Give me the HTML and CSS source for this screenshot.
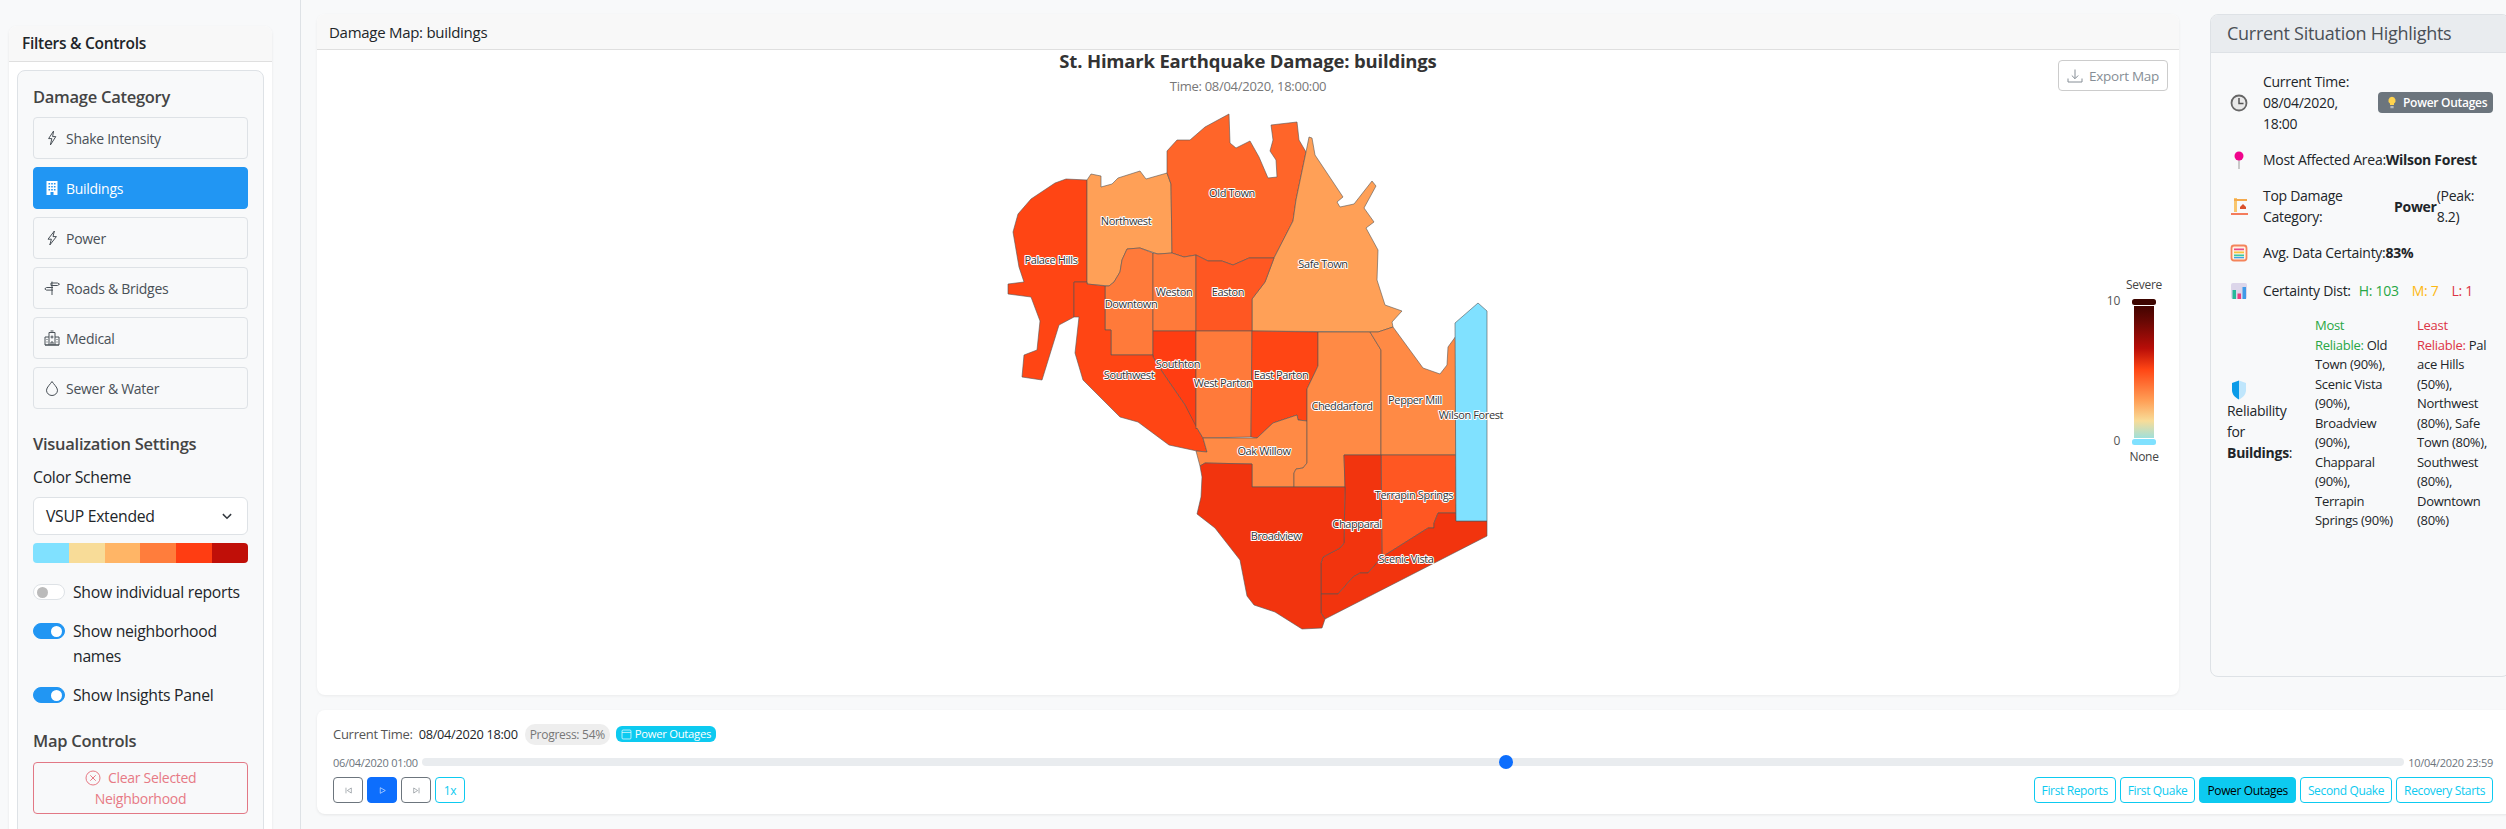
FILE: index.html
```html
<!DOCTYPE html>
<html lang="en">
<head>
  <meta charset="UTF-8">
  <meta name="viewport" content="width=device-width, initial-scale=1.0">
  <title>St. Himark Earthquake Damage</title>
  <link rel="stylesheet" href="styles.css">
</head>
<body>
  <!-- Coluna de filtros -->
  <aside class="sidebar">
    <div class="filters">
      <h2 class="filters-title">Filters &amp; Controls</h2>
      <div class="filters-body">
        <div class="filters-box">
          <h3 class="group-title">Damage Category</h3>
          <div class="category-list">
            <button class="category">
              <svg class="icon" viewBox="0 0 16 16"><path d="M9.6 1 4.6 8.6h3.2L6.4 15 11.8 6.6H8.6l1-5.6z"/></svg>
              Shake Intensity
            </button>
            <button class="category category-active">
              <svg class="icon" viewBox="0 0 16 16"><path class="solid" d="M2.5 1h11v14h-4v-3h-3v3h-4z"/><path class="holes" d="M4.5 3h1.6v1.6H4.5zM7.2 3h1.6v1.6H7.2zM9.9 3h1.6v1.6H9.9zM4.5 6h1.6v1.6H4.5zM7.2 6h1.6v1.6H7.2zM9.9 6h1.6v1.6H9.9zM4.5 9h1.6v1.6H4.5zM7.2 9h1.6v1.6H7.2zM9.9 9h1.6v1.6H9.9z"/></svg>
              Buildings
            </button>
            <button class="category">
              <svg class="icon" viewBox="0 0 16 16"><path d="M10.4 1 4 9.2h3.4L5.8 15l6.6-8.4H9z"/></svg>
              Power
            </button>
            <button class="category">
              <svg class="icon" viewBox="0 0 16 16"><path d="M8 15V1.5M7 3h6.5L15.5 4.2 13.5 5.5H7zM9 7.5H2.5L.8 8.8l1.7 1.3H9"/></svg>
              Roads &amp; Bridges
            </button>
            <button class="category">
              <svg class="icon" viewBox="0 0 16 16"><path d="M5 15V2.5h6V15M5 7H1v8h14V7h-4M1 15h14M6.5 1h3M8 5.5v3M6.500 7h3M7 15v-3h2v3M2.5 9.5h1M2.5 12h1M12.5 9.5h1M12.5 12h1"/></svg>
              Medical
            </button>
            <button class="category">
              <svg class="icon" viewBox="0 0 16 16"><path d="M8 1.500C6.500 4 2.500 7.400 2.500 10.200a5.500 5.300 0 0 0 11 0C13.500 7.400 9.500 4 8 1.500z"/></svg>
              Sewer &amp; Water
            </button>
          </div>

          <h3 class="group-title settings-title">Visualization Settings</h3>
          <div class="field-label">Color Scheme</div>
          <div class="select-box">
            VSUP Extended
            <svg class="chevron" viewBox="0 0 16 16"><path d="M2.500 5.500 8 11l5.500-5.500"/></svg>
          </div>
          <div class="scheme">
            <span class="swatch swatch-1"></span>
            <span class="swatch swatch-2"></span>
            <span class="swatch swatch-3"></span>
            <span class="swatch swatch-4"></span>
            <span class="swatch swatch-5"></span>
            <span class="swatch swatch-6"></span>
          </div>

          <div class="switch-row">
            <span class="switch"><span class="knob"></span></span>
            <span>Show individual reports</span>
          </div>
          <div class="switch-row">
            <span class="switch switch-on"><span class="knob"></span></span>
            <span>Show neighborhood names</span>
          </div>
          <div class="switch-row">
            <span class="switch switch-on"><span class="knob"></span></span>
            <span>Show Insights Panel</span>
          </div>

          <h3 class="group-title controls-title">Map Controls</h3>
          <button class="clear-btn">
            <svg class="icon" viewBox="0 0 16 16"><circle cx="8" cy="8" r="7"/><path d="M5.300 5.300l5.400 5.400M10.700 5.300l-5.400 5.400"/></svg>
            Clear Selected Neighborhood
          </button>
        </div>
      </div>
    </div>
  </aside>

  <main class="content">
    <div class="top-row">
      <section class="map-card">
        <h2 class="map-title">Damage Map: buildings</h2>
        <div class="map-body">
          <button class="export-btn">
            <svg class="icon" viewBox="0 0 16 16"><path d="M8 1.500v9M4.800 7.500 8 10.700l3.200-3.200M1 10.500v3.500h14v-3.500"/></svg>
            Export Map
          </button>
          <div class="chart-head">
            <div class="chart-title">St. Himark Earthquake Damage: buildings</div>
            <div class="chart-time">Time: 08/04/2020, 18:00:00</div>
          </div>
          <svg class="map" viewBox="317 96 1862 599">
            <defs>
              <linearGradient id="legendRamp" x1="0" y1="0" x2="0" y2="1">
                <stop offset="0" stop-color="#420400"/>
                <stop offset="0.12" stop-color="#6a0804"/>
                <stop offset="0.32" stop-color="#b80d08"/>
                <stop offset="0.48" stop-color="#ff4514"/>
                <stop offset="0.72" stop-color="#ffa057"/>
                <stop offset="0.87" stop-color="#f8dc98"/>
                <stop offset="1" stop-color="#a0e0da"/>
              </linearGradient>
            </defs>

            <g class="areas">
              <polygon fill="#ff4514" points="1087,180 1066,179 1055,183 1031,199 1018,214 1013,232 1019,267 1024,282 1008,284 1008,294 1031,297 1040,321 1037,350 1024,355 1022,377 1042,380 1059,325 1074,317 1074,282 1087,282"/>
              <polygon fill="#ffa057" points="1087,180 1091,174 1101,176 1101,187 1112,184 1118,178 1140,171 1146,179 1167,173 1171,184 1172,253 1158,254 1140,248 1127,249 1122,260 1120,272 1114,282 1109,286 1087,284"/>
              <polygon fill="#ff6529" points="1167,173 1167,151 1177,140 1190,140 1205,127 1229,114 1230,143 1236,148 1250,141 1259,157 1268,178 1277,177 1276,160 1270,151 1273,140 1271,125 1297,122 1299,140 1306,152 1296,200 1293,221 1274,258 1249,258 1233,265 1222,261 1208,261 1196,255 1184,257 1172,253 1171,184"/>
              <polygon fill="#ffa057" points="1306,152 1309,137 1312,138 1315,155 1343,197 1337,202 1340,207 1354,204 1372,181 1376,186 1364,208 1374,222 1366,228 1378,250 1377,280 1385,305 1402,311 1392,322 1393,327 1378,332 1252,331 1252,299 1265,282 1274,258 1293,221 1296,200"/>
              <polygon fill="#ff7a3a" points="1127,249 1140,248 1153,253 1153,355 1111,355 1111,330 1105,330 1105,286 1109,286 1114,282 1120,272 1122,260"/>
              <polygon fill="#ff7a3a" points="1153,253 1158,254 1172,253 1184,257 1196,255 1196,331 1153,331"/>
              <polygon fill="#ff5722" points="1196,255 1208,261 1222,261 1233,265 1249,258 1274,258 1265,282 1252,299 1252,331 1196,331"/>
              <polygon fill="#ff3d12" points="1153,331 1196,331 1196,429 1185,405 1163,373 1153,357"/>
              <polygon fill="#ff4514" points="1074,282 1087,282 1087,284 1105,286 1105,330 1111,330 1111,355 1153,355 1153,357 1163,373 1185,405 1197,428 1203,438 1207,452 1197,451 1169,445 1138,422 1120,417 1083,380 1075,353 1079,317 1074,317"/>
              <polygon fill="#ff7a3a" points="1196,331 1252,331 1251,437 1203,438 1197,428 1196,429"/>
              <polygon fill="#ff4514" points="1252,331 1318,332 1318,366 1307,389 1307,421 1298,420 1297,415 1273,423 1257,438 1251,437"/>
              <polygon fill="#ff8a45" points="1203,438 1257,438 1273,423 1297,415 1298,420 1307,421 1307,463 1303,468 1296,469 1294,473 1294,487 1252,487 1252,464 1205,463 1200,466 1196,451 1207,452"/>
              <polygon fill="#ff8a45" points="1318,332 1370,332 1381,350 1381,455 1344,455 1345,487 1294,487 1294,473 1296,469 1303,468 1307,463 1307,389 1318,366"/>
              <polygon fill="#ff8a45" points="1370,332 1378,332 1393,327 1423,368 1440,374 1447,365 1448,347 1456,336 1456,455 1381,455 1381,350"/>
              <polygon fill="#ff5722" points="1381,455 1456,455 1456,513 1438,513 1434,523 1434,528 1428,528 1382,557"/>
              <polygon fill="#f2340e" points="1344,455 1381,455 1382,557 1368,573 1360,573 1353,577 1338,594 1321,594 1321,563 1323,557 1340,548 1344,543 1345,487"/>
              <polygon fill="#f2340e" points="1321,594 1338,594 1353,577 1360,573 1368,573 1382,557 1428,528 1434,528 1434,523 1438,513 1456,513 1456,521 1487,521 1487,536 1325,619 1321,613"/>
              <polygon fill="#f2340e" points="1200,466 1205,463 1252,464 1252,487 1345,487 1344,543 1340,548 1323,557 1321,563 1321,613 1325,619 1322,628 1302,629 1275,612 1254,605 1247,596 1240,560 1215,528 1197,514 1201,497 1202,477"/>
              <polygon fill="#80e1ff" points="1455,323 1478,303 1487,311 1487,521 1456,521"/>
            </g>

            <g class="labels">
              <text x="1051" y="264">Palace Hills</text>
              <text x="1126" y="225">Northwest</text>
              <text x="1232" y="197">Old Town</text>
              <text x="1323" y="268">Safe Town</text>
              <text x="1174" y="296">Weston</text>
              <text x="1228" y="296">Easton</text>
              <text x="1131" y="308">Downtown</text>
              <text x="1178" y="368">Southton</text>
              <text x="1129" y="379">Southwest</text>
              <text x="1223" y="387">West Parton</text>
              <text x="1281" y="379">East Parton</text>
              <text x="1342" y="410">Cheddarford</text>
              <text x="1415" y="404">Pepper Mill</text>
              <text x="1471" y="419">Wilson Forest</text>
              <text x="1264" y="455">Oak Willow</text>
              <text x="1414" y="499">Terrapin Springs</text>
              <text x="1357" y="528">Chapparal</text>
              <text x="1276" y="540">Broadview</text>
              <text x="1406" y="563">Scenic Vista</text>
            </g>

            <g class="legend">
              <text class="legend-name" x="2144" y="289">Severe</text>
              <text class="legend-num" x="2120" y="305">10</text>
              <rect class="legend-top" x="2132" y="299" width="24" height="6" rx="2.500"/>
              <rect x="2134" y="306" width="20" height="132" fill="url(#legendRamp)"/>
              <rect class="legend-bottom" x="2132" y="439" width="24" height="6" rx="2.500"/>
              <text class="legend-num" x="2120" y="445">0</text>
              <text class="legend-name" x="2144" y="461">None</text>
            </g>
          </svg>
        </div>
      </section>

      <!-- Painel de destaques -->
      <section class="highlights">
        <h2 class="highlights-title">Current Situation Highlights</h2>
        <div class="highlights-body">
          <div class="hl-row">
            <svg class="hl-icon" viewBox="0 0 24 24"><circle cx="12" cy="12" r="7.500" fill="#e9e9e9" stroke="#666" stroke-width="1.800"/><path d="M12 7v5.500h4.500" fill="none" stroke="#555" stroke-width="1.500"/></svg>
            <div class="hl-time">Current Time:<br>08/04/2020,<br>18:00</div>
            <span class="phase-badge">
              <svg class="bulb" viewBox="0 0 12 16"><path d="M6 1a4.500 4.500 0 0 0-2.500 8.200V11h5V9.200A4.500 4.500 0 0 0 6 1z" fill="#ffd34d"/><path d="M4 12.200h4V15H4z" fill="#b9b9b9"/></svg>
              Power Outages
            </span>
          </div>
          <div class="hl-row">
            <svg class="hl-icon" viewBox="0 0 24 24"><path d="M12 12v9" stroke="#c9c9c9" stroke-width="2"/><circle cx="12" cy="8" r="4.500" fill="#f0058c"/></svg>
            <span>Most Affected Area:</span><strong>Wilson Forest</strong>
          </div>
          <div class="hl-row">
            <svg class="hl-icon" viewBox="0 0 24 24"><path d="M7 4h3v14H7z" fill="#f8c66d"/><path d="M7 5h13v2H7z" fill="#f4a94c"/><path d="M13 13l3-3 3 3v2h-6z" fill="#d9512c"/><path d="M4 19h17v2H4z" fill="#f47c5c"/></svg>
            <div class="hl-category">Top Damage<br>Category:</div>
            <strong>Power</strong>
            <span>(Peak:<br>8.2)</span>
          </div>
          <div class="hl-row">
            <svg class="hl-icon" viewBox="0 0 24 24"><rect x="4.500" y="4.500" width="15" height="15" rx="2.500" fill="#fff3e4" stroke="#f4845a" stroke-width="1.800"/><path d="M7 7.500h10v1.800H7z" fill="#e84d8a"/><path d="M7 10.500h10v1.800H7z" fill="#f8c33c"/><path d="M7 13.500h10v1.800H7z" fill="#3bc8a4"/><path d="M7 16h10v1.300H7z" fill="#3fa0e8"/></svg>
            <span>Avg. Data Certainty:</span><strong>83%</strong>
          </div>
          <div class="hl-row hl-row-dist">
            <svg class="hl-icon" viewBox="0 0 24 24"><rect x="4" y="4" width="16" height="16" rx="2" fill="#dcd6ea"/><path d="M5.500 11h3.500v9H5.500z" fill="#26b99a"/><path d="M10.500 14.500H14V20h-3.500z" fill="#ee3d7c"/><path d="M15.500 8H19v12h-3.500z" fill="#3f9ae8"/></svg>
            <span>Certainty Dist:</span>
            <span class="dist dist-high">H: 103</span>
            <span class="dist dist-mid">M: 7</span>
            <span class="dist dist-low">L: 1</span>
          </div>
          <div class="hl-row reliability">
            <div class="rel-head">
              <svg class="hl-icon" viewBox="0 0 24 24"><path d="M12 2.500 5 5v7c0 4.500 3 7.500 7 9.500z" fill="#0a9be8"/><path d="M12 2.500 19 5v7c0 4.500-3 7.500-7 9.500z" fill="#bfe6fc"/></svg>
              <div>Reliability<br>for<br><strong>Buildings</strong>:</div>
            </div>
            <div class="rel-col rel-most">
              <span class="rel-good">Most<br>Reliable:</span> Old<br>Town (90%),<br>Scenic Vista<br>(90%),<br>Broadview<br>(90%),<br>Chapparal<br>(90%),<br>Terrapin<br>Springs (90%)
            </div>
            <div class="rel-col">
              <span class="rel-bad">Least<br>Reliable:</span> Pal<br>ace Hills<br>(50%),<br>Northwest<br>(80%), Safe<br>Town (80%),<br>Southwest<br>(80%),<br>Downtown<br>(80%)
            </div>
          </div>
        </div>
      </section>
    </div>

    <!-- Linha do tempo -->
    <section class="timeline">
      <div class="tl-status">
        <span class="tl-label">Current Time:</span>
        <span class="tl-time">08/04/2020 18:00</span>
        <span class="progress-pill">Progress: 54%</span>
        <span class="event-pill">
          <svg class="icon" viewBox="0 0 16 16"><rect x="1.500" y="1.500" width="13" height="13" rx="1.500"/><path d="M1.500 5h13"/></svg>
          Power Outages
        </span>
      </div>
      <div class="tl-slider">
        <span class="tl-date">06/04/2020 01:00</span>
        <div class="track"><span class="thumb" style="left: 54.7%"></span></div>
        <span class="tl-date">10/04/2020 23:59</span>
      </div>
      <div class="tl-buttons">
        <div class="btn-group">
          <button class="tl-btn"><svg class="icon" viewBox="0 0 16 16"><path d="M3.500 3v10M13 3.500v9L6 8z"/></svg></button>
          <button class="tl-btn tl-btn-play"><svg class="icon" viewBox="0 0 16 16"><path d="M4 3v10l9-5z"/></svg></button>
          <button class="tl-btn"><svg class="icon" viewBox="0 0 16 16"><path d="M12.500 3v10M3 3.500v9L10 8z"/></svg></button>
          <button class="tl-btn tl-btn-speed">1x</button>
        </div>
        <div class="btn-group">
          <button class="tl-event">First Reports</button>
          <button class="tl-event">First Quake</button>
          <button class="tl-event tl-event-active">Power Outages</button>
          <button class="tl-event">Second Quake</button>
          <button class="tl-event">Recovery Starts</button>
        </div>
      </div>
    </section>
  </main>
</body>
</html>
```

FILE: styles.css
```css
* {
  box-sizing: border-box;
}

html, body {
  height: 100%;
}

body {
  margin: 0;
  display: flex;
  overflow: hidden;
  font-family: "Open Sans", "Noto Sans", sans-serif;
  font-size: 14px;
  letter-spacing: -0.02em;
  line-height: 21px;
  color: #212529;
  background: #f8f9fa;
}

h2, h3 {
  margin: 0;
}

button {
  font-family: inherit;
  letter-spacing: inherit;
  cursor: pointer;
}

.icon {
  width: 16px;
  height: 16px;
  flex: none;
  fill: none;
  stroke: currentColor;
  stroke-width: 1;
}

/* Sidebar */
.sidebar {
  width: 301px;
  flex: none;
  height: 100%;
  padding: 26px 28px 0 9px;
  border-right: 1px solid #dee2e6;
  overflow: hidden;
}

.filters {
  background: #fff;
  border-radius: 8px 8px 0 0;
  box-shadow: 0 1px 3px rgba(0, 0, 0, 0.08);
}

.filters-title {
  height: 36px;
  padding: 0 13px;
  font-size: 15.500px;
  font-weight: 600;
  line-height: 34px;
  background: #f8f8f8;
  border-bottom: 1px solid #dfdfdf;
  border-radius: 8px 8px 0 0;
}

.filters-body {
  padding: 8px 8px 0;
}

.filters-box {
  padding: 15px 15px 40px;
  background: #f8f9fa;
  border: 1px solid #dee2e6;
  border-radius: 8px;
}

.group-title {
  font-size: 16.500px;
  font-weight: 600;
  line-height: 22px;
  color: #444;
}

.category-list {
  display: flex;
  flex-direction: column;
  gap: 8px;
  margin-top: 9px;
}

.category {
  display: flex;
  align-items: center;
  gap: 6px;
  height: 42px;
  padding: 0 10px;
  font-size: 14px;
  color: #495057;
  text-align: left;
  background: #f8f9fa;
  border: 1px solid #dee2e6;
  border-radius: 4px;
}

.category-active {
  color: #fff;
  background: #2196f3;
  border-color: #2196f3;
}

.category-active .solid {
  fill: #fff;
  stroke: none;
}

.category-active .holes {
  fill: #2196f3;
  stroke: none;
}

.settings-title {
  margin-top: 24px;
}

.field-label {
  margin-top: 11px;
  font-size: 15.750px;
  line-height: 22px;
}

.select-box {
  display: flex;
  align-items: center;
  justify-content: space-between;
  height: 38px;
  margin-top: 9px;
  padding: 0 14px 0 12px;
  font-size: 15.750px;
  background: #fff;
  border: 1px solid #dee2e6;
  border-radius: 6px;
}

.chevron {
  width: 12px;
  height: 12px;
  fill: none;
  stroke: #343a40;
  stroke-width: 2;
}

.scheme {
  display: flex;
  height: 20px;
  margin-top: 8px;
  border-radius: 4px;
  overflow: hidden;
}

.swatch {
  flex: 1;
}

.swatch-1 { background: #80e1ff; }
.swatch-2 { background: #f8dc98; }
.swatch-3 { background: #ffb566; }
.swatch-4 { background: #ff7d3c; }
.swatch-5 { background: #ff3d12; }
.swatch-6 { background: #c00f08; }

.switch-row {
  display: flex;
  gap: 8px;
  margin-top: 14px;
  font-size: 15.750px;
  line-height: 25px;
}

.scheme + .switch-row {
  margin-top: 17px;
}

.switch {
  display: flex;
  align-items: center;
  justify-content: flex-start;
  width: 32px;
  height: 16px;
  margin-top: 4px;
  padding: 0 2px 0 3px;
  flex: none;
  background: #fff;
  border: 1px solid #dee2e6;
  border-radius: 8px;
}

.knob {
  width: 11px;
  height: 11px;
  background: #bbb;
  border-radius: 50%;
}

.switch-on {
  justify-content: flex-end;
  background: #2196f3;
  border-color: #2196f3;
}

.switch-on .knob {
  background: #fff;
}

.controls-title {
  margin-top: 22px;
}

.clear-btn {
  display: block;
  width: 100%;
  height: 52px;
  margin-top: 10px;
  padding: 4px 12px;
  font-size: 14px;
  line-height: 21px;
  color: #e77a85;
  background: transparent;
  border: 1px solid #e27885;
  border-radius: 4px;
}

.clear-btn .icon {
  margin-right: 4px;
  vertical-align: -3px;
}

/* Area central */
.content {
  flex: 1;
  min-width: 0;
  padding: 14px 0 0 16px;
  overflow: hidden;
}

.top-row {
  display: flex;
  gap: 31px;
  height: 681px;
}

.map-card {
  width: 1862px;
  flex: none;
  background: #fff;
  border-radius: 8px;
  box-shadow: 0 1px 3px rgba(0, 0, 0, 0.06);
  overflow: hidden;
}

.map-title {
  height: 36px;
  padding: 0 12px;
  font-size: 15px;
  font-weight: 500;
  line-height: 37px;
  background: #f8f8f8;
  border-bottom: 1px solid #dfdfdf;
}

.map-body {
  position: relative;
}

.map {
  display: block;
  width: 1862px;
  height: 599px;
}

.export-btn {
  position: absolute;
  top: 10px;
  right: 11px;
  display: flex;
  align-items: center;
  gap: 6px;
  height: 31px;
  padding: 0 8px;
  font-size: 13.500px;
  color: #868e96;
  background: #fff;
  border: 1px solid #ccc;
  border-radius: 4px;
}

.chart-head {
  height: 46px;
  text-align: center;
}

.chart-title {
  font-size: 18.500px;
  font-weight: 700;
  line-height: 22px;
  letter-spacing: -0.01em;
  color: #333;
}

.chart-time {
  margin-top: 6px;
  font-size: 13px;
  line-height: 16px;
  color: #777;
}

.areas polygon {
  stroke: #555;
  stroke-opacity: 0.75;
  stroke-width: 0.8;
}

.labels text {
  font-size: 11px;
  letter-spacing: -0.035em;
  text-anchor: middle;
  fill: #333;
  stroke: #fff;
  stroke-width: 2px;
  stroke-linejoin: round;
  paint-order: stroke;
}

.legend-name {
  font-size: 12px;
  text-anchor: middle;
  fill: #444;
}

.legend-num {
  font-size: 12px;
  text-anchor: end;
  fill: #555;
}

.legend-top {
  fill: #3d0500;
}

.legend-bottom {
  fill: #80e1ff;
}

/* Painel da direita */
.highlights {
  width: 300px;
  height: 663px;
  flex: none;
  background: #f8f9fa;
  border: 1px solid #dee2e6;
  border-radius: 8px;
  overflow: hidden;
}

.highlights-title {
  height: 38px;
  padding: 0 16px;
  font-size: 18px;
  font-weight: 500;
  line-height: 37px;
  color: #495057;
  background: #e9ecef;
  border-bottom: 1px solid #dee2e6;
}

.highlights-body {
  display: flex;
  flex-direction: column;
  gap: 15px;
  padding: 18px 16px;
}

.hl-row {
  display: flex;
  align-items: center;
}

.hl-row-dist {
  margin-top: 2px;
}

.hl-icon {
  width: 24px;
  height: 24px;
  margin: -2px 12px -2px 0;
  flex: none;
}

.hl-time {
  width: 115px;
  flex: none;
}

.hl-category {
  width: 131px;
  flex: none;
}

.phase-badge {
  display: flex;
  align-items: center;
  gap: 6px;
  height: 21px;
  padding: 0 6px 0 9px;
  font-size: 12px;
  font-weight: 600;
  color: #fff;
  white-space: nowrap;
  background: #6c757d;
  border-radius: 4px;
}

.bulb {
  width: 10px;
  height: 13px;
}

.dist {
  font-weight: 500;
  margin-left: 13px;
}

.dist-high { margin-left: 8px; color: #28a745; }
.dist-mid { color: #fdb813; }
.dist-low { color: #dc3545; }

.reliability {
  align-items: flex-start;
}

.rel-head {
  width: 88px;
  flex: none;
  align-self: center;
  margin-top: -4px;
}

.rel-head .hl-icon {
  display: block;
}

.rel-col {
  width: 102px;
  flex: none;
  font-size: 13px;
  line-height: 19.500px;
  white-space: nowrap;
}

.rel-good {
  font-weight: 500;
  color: #28a745;
}

.rel-bad {
  font-weight: 500;
  color: #dc3545;
}

/* Linha do tempo */
.timeline {
  height: 104px;
  margin-top: 15px;
  margin-right: -8px;
  padding: 12px 21px 0 16px;
  background: #fff;
  border-radius: 8px;
  box-shadow: 0 1px 3px rgba(0, 0, 0, 0.08);
}

.tl-status {
  display: flex;
  align-items: center;
  height: 24px;
  font-size: 12.750px;
}

.tl-label {
  font-size: 13px;
  font-weight: 500;
  color: #555;
}

.tl-time {
  margin-left: 6px;
}

.progress-pill {
  margin-left: 7px;
  padding: 0 5px;
  font-size: 12px;
  line-height: 21px;
  color: #777;
  background: #eee;
  border-radius: 10px;
}

.event-pill {
  display: flex;
  align-items: center;
  gap: 3px;
  margin-left: 6px;
  padding: 0 5px;
  font-size: 11.250px;
  line-height: 16px;
  color: #fff;
  background: #0dcaf0;
  border-radius: 6px;
}

.event-pill .icon {
  width: 11px;
  height: 11px;
}

.tl-slider {
  display: flex;
  align-items: center;
  gap: 4px;
  height: 18px;
  margin-top: 7px;
}

.tl-date {
  font-size: 11px;
  color: #6c757d;
  white-space: nowrap;
}

.track {
  position: relative;
  flex: 1;
  height: 8px;
  background: #e9ecef;
  border-radius: 4px;
}

.thumb {
  position: absolute;
  top: -3px;
  width: 14px;
  height: 14px;
  margin-left: -7px;
  background: #0d6efd;
  border-radius: 50%;
}

.tl-buttons {
  display: flex;
  justify-content: space-between;
  margin-top: 6px;
}

.btn-group {
  display: flex;
  gap: 4px;
}

.tl-btn {
  display: flex;
  align-items: center;
  justify-content: center;
  width: 30px;
  height: 26px;
  padding: 0;
  font-size: 12px;
  color: #6c757d;
  background: #fff;
  border: 1px solid #6c757d;
  border-radius: 4px;
}

.tl-btn .icon {
  width: 9px;
  height: 9px;
}

.tl-btn-play {
  color: #fff;
  background: #0d6efd;
  border-color: #0d6efd;
}

.tl-btn-speed {
  color: #0dcaf0;
  border-color: #0dcaf0;
}

.tl-event {
  height: 26px;
  padding: 0 7px;
  font-size: 12px;
  letter-spacing: -0.03em;
  color: #0dcaf0;
  background: #fff;
  border: 1px solid #0dcaf0;
  border-radius: 4px;
}

.tl-event-active {
  color: #000;
  background: #0dcaf0;
}
```
